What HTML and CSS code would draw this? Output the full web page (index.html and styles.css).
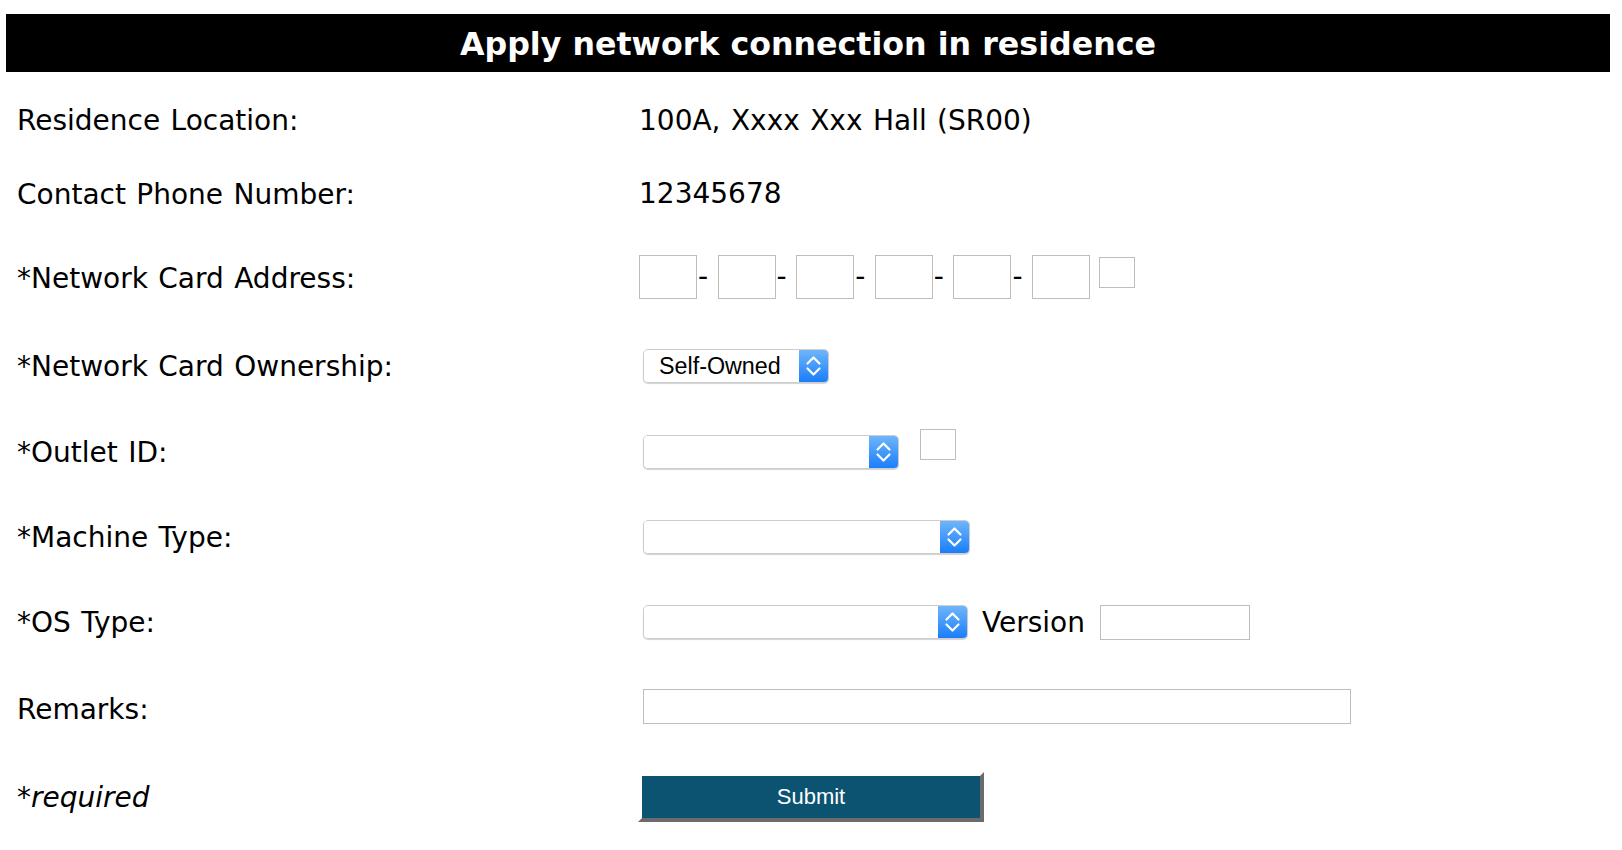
FILE: index.html
```html
<!DOCTYPE html>
<html lang="en">
<head>
<meta charset="utf-8">
<title>Apply network connection in residence</title>
<link rel="stylesheet" href="styles.css">
</head>
<body>
<div class="page">
  <h1 class="title">Apply network connection in residence</h1>
  <form class="form">
    <div class="row row-loc">
      <div class="label">Residence Location:</div>
      <div class="field">100A, Xxxx Xxx Hall (SR00)</div>
    </div>
    <div class="row row-phone">
      <div class="label">Contact Phone Number:</div>
      <div class="field">12345678</div>
    </div>
    <div class="row row-mac">
      <div class="label">*Network Card Address:</div>
      <div class="field">
        <input class="box mac" type="text"><span class="dash">-</span>
        <input class="box mac" type="text"><span class="dash">-</span>
        <input class="box mac" type="text"><span class="dash">-</span>
        <input class="box mac" type="text"><span class="dash">-</span>
        <input class="box mac" type="text"><span class="dash">-</span>
        <input class="box mac last" type="text">
        <input class="box tiny tiny-mac" type="text">
      </div>
    </div>
    <div class="row row-own">
      <div class="label">*Network Card Ownership:</div>
      <div class="field">
        <span class="select sel-own">
          <select><option>Self-Owned</option></select>
          <span class="arrows"><svg viewBox="0 0 29 34" width="29" height="34"><path d="M8.5 14.5 L14.5 8.5 L20.5 14.5"/><path d="M8.5 19.5 L14.5 25.5 L20.5 19.5"/></svg></span>
        </span>
      </div>
    </div>
    <div class="row row-outlet">
      <div class="label">*Outlet ID:</div>
      <div class="field">
        <span class="select sel-outlet">
          <select><option></option></select>
          <span class="arrows"><svg viewBox="0 0 29 34" width="29" height="34"><path d="M8.5 14.5 L14.5 8.5 L20.5 14.5"/><path d="M8.5 19.5 L14.5 25.5 L20.5 19.5"/></svg></span>
        </span>
        <input class="box tiny tiny-outlet" type="text">
      </div>
    </div>
    <div class="row row-machine">
      <div class="label">*Machine Type:</div>
      <div class="field">
        <span class="select sel-machine">
          <select><option></option></select>
          <span class="arrows"><svg viewBox="0 0 29 34" width="29" height="34"><path d="M8.5 14.5 L14.5 8.5 L20.5 14.5"/><path d="M8.5 19.5 L14.5 25.5 L20.5 19.5"/></svg></span>
        </span>
      </div>
    </div>
    <div class="row row-os">
      <div class="label">*OS Type:</div>
      <div class="field">
        <span class="select sel-os">
          <select><option></option></select>
          <span class="arrows"><svg viewBox="0 0 29 34" width="29" height="34"><path d="M8.5 14.5 L14.5 8.5 L20.5 14.5"/><path d="M8.5 19.5 L14.5 25.5 L20.5 19.5"/></svg></span>
        </span>
        <span class="version-label">Version</span>
        <input class="box version" type="text">
      </div>
    </div>
    <div class="row row-remarks">
      <div class="label">Remarks:</div>
      <div class="field">
        <input class="box remarks" type="text">
      </div>
    </div>
    <div class="row row-submit">
      <div class="label required">*required</div>
      <div class="field">
        <button class="submit" type="button">Submit</button>
      </div>
    </div>
  </form>
</div>
</body>
</html>
```

FILE: styles.css
```css
html, body {
  margin: 0;
  padding: 0;
  background: #ffffff;
}

body {
  font-family: "DejaVu Sans", Verdana, sans-serif;
  font-size: 28px;
  word-spacing: 1.5px;
  color: #000000;
}

.page {
  padding: 14px 12px 0 6px;
}

.title {
  margin: 0;
  height: 58px;
  line-height: 60px;
  background: #000000;
  color: #ffffff;
  font-size: 31.7px;
  font-weight: bold;
  word-spacing: 0;
  text-align: center;
}

.form {
  margin-top: 11px;
  display: flex;
  flex-direction: column;
}

.row {
  display: flex;
  align-items: center;
}

.row-loc { height: 74px; }
.row-phone { height: 73px; }
.row-mac { height: 93px; }
.row-own { height: 86px; }
.row-outlet { height: 86px; }
.row-machine { height: 83px; }
.row-os { height: 88px; }
.row-remarks { height: 81px; }
.row-submit { height: 100px; }

.label {
  width: 622px;
  padding-left: 11px;
  flex: none;
  white-space: nowrap;
}

.row-phone .label { padding-top: 2px; }
.row-mac .label { padding-top: 4px; }
.row-machine .label { padding-top: 2px; }
.row-remarks .label { padding-top: 6px; }

.required {
  font-style: italic;
}

.field {
  display: flex;
  align-items: center;
  white-space: nowrap;
}

.box {
  box-sizing: border-box;
  margin: 0;
  padding: 0;
  border: 1px solid #bdbdbd;
  background: #ffffff;
  border-radius: 0;
  font-family: "DejaVu Sans", Verdana, sans-serif;
}

.mac {
  width: 58px;
  height: 44px;
}

.dash {
  width: 20.6px;
  padding-left: 1px;
  box-sizing: border-box;
  line-height: 1;
}

.last {
  margin-right: 9px;
}

.tiny {
  width: 36px;
  height: 31px;
}

.tiny-mac {
  margin-bottom: 9px;
}

.tiny-outlet {
  margin-left: 21px;
  margin-bottom: 16px;
}

.select {
  box-sizing: border-box;
  display: inline-flex;
  height: 34px;
  margin-left: 4px;
  border: 1px solid #cdcdcd;
  border-radius: 5px;
  overflow: hidden;
  background: #ffffff;
  box-shadow: 0 1px 1px rgba(0, 0, 0, 0.18);
}

.select select {
  -webkit-appearance: none;
  appearance: none;
  flex: 1;
  min-width: 0;
  height: 100%;
  margin: 0;
  border: 0;
  padding: 0 0 0 15px;
  background: #ffffff;
  font-family: "Liberation Sans", Arial, Helvetica, sans-serif;
  font-size: 23.3px;
  word-spacing: 0;
  color: #000000;
  outline: none;
}

.arrows {
  flex: none;
  width: 29px;
  height: 100%;
  display: flex;
  align-items: center;
  justify-content: center;
  background: linear-gradient(#6fb5fb, #1a7efb);
}

.arrows svg {
  display: block;
  fill: none;
  stroke: #ffffff;
  stroke-width: 2.2;
  stroke-linecap: round;
  stroke-linejoin: round;
}

.sel-own { width: 186px; }
.sel-outlet { width: 256px; }
.sel-machine { width: 327px; }
.sel-os { width: 325px; }

.version-label {
  margin-left: 14px;
  margin-right: 15px;
}

.version {
  width: 150px;
  height: 35px;
}

.remarks {
  margin-left: 4px;
  width: 708px;
  height: 35px;
}

.submit {
  box-sizing: border-box;
  margin: 0 0 0 -1px;
  width: 346px;
  height: 50px;
  padding: 0;
  border-width: 4px;
  border-style: solid;
  border-color: #ffffff #6b6b6b #6b6b6b #ffffff;
  background: #0b5371;
  color: #ffffff;
  font-family: "Liberation Sans", Arial, Helvetica, sans-serif;
  font-size: 22px;
  word-spacing: 0;
  cursor: pointer;
}
```
